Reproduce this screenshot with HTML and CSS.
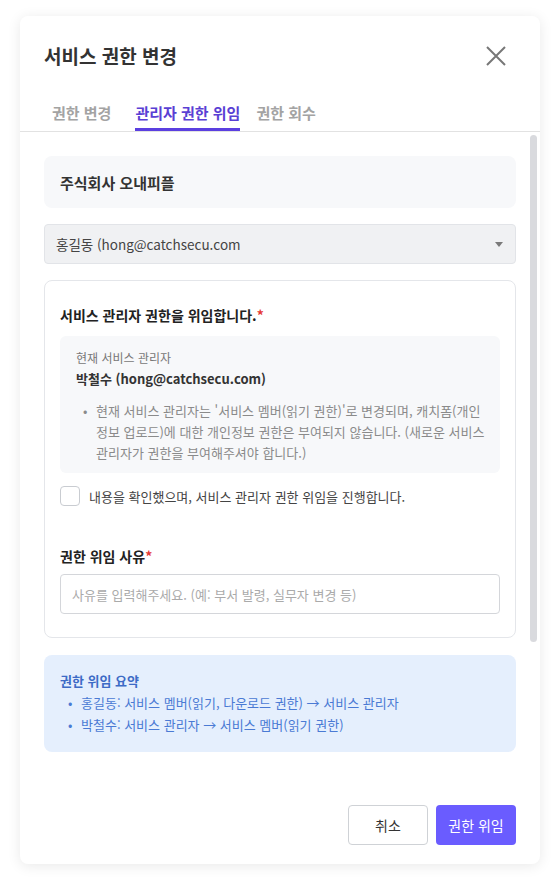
FILE: index.html
```html
<!DOCTYPE html>
<html lang="ko">

<head>
    <meta charset="UTF-8">
    <meta name="viewport" content="width=device-width, initial-scale=1.0">
    <title>서비스 권한 변경</title>
    <link rel="stylesheet" href="styles.css">
</head>

<body>
    <div class="modal">
        <div class="modal-header">
            <h1 class="modal-title">서비스 권한 변경</h1>
            <button class="close-button" aria-label="닫기">
                <svg width="20" height="20" viewBox="0 0 20 20">
                    <path d="M1 1 L19 19 M19 1 L1 19" stroke="#777" stroke-width="2" fill="none" />
                </svg>
            </button>
        </div>

        <div class="tabs">
            <span class="tab">권한 변경</span>
            <span class="tab active">관리자 권한 위임</span>
            <span class="tab">권한 회수</span>
        </div>

        <div class="modal-body">
            <div class="body-content">
                <div class="company-box">주식회사 오내피플</div>

                <div class="select">
                    <span>홍길동 (hong@catchsecu.com</span>
                    <span class="caret"></span>
                </div>

                <div class="card">
                    <h2 class="field-title">서비스 관리자 권한을 위임합니다.<span class="required">*</span></h2>

                    <div class="info-box">
                        <p class="info-label">현재 서비스 관리자</p>
                        <p class="info-name">박철수 (hong@catchsecu.com)</p>
                        <ul class="info-list">
                            <li>현재 서비스 관리자는 '서비스 멤버(읽기 권한)'로 변경되며, 캐치폼(개인<br>정보 업로드)에 대한 개인정보 권한은 부여되지 않습니다. (새로운 서비스<br>관리자가 권한을 부여해주셔야 합니다.)</li>
                        </ul>
                    </div>

                    <label class="check-row">
                        <span class="checkbox"></span>
                        <span>내용을 확인했으며, 서비스 관리자 권한 위임을 진행합니다.</span>
                    </label>

                    <h2 class="field-title reason-title">권한 위임 사유<span class="required">*</span></h2>
                    <input class="text-input" type="text" placeholder="사유를 입력해주세요. (예: 부서 발령, 실무자 변경 등)">
                </div>

                <div class="summary">
                    <h3 class="summary-title">권한 위임 요약</h3>
                    <ul class="summary-list">
                        <li>홍길동: 서비스 멤버(읽기, 다운로드 권한) → 서비스 관리자</li>
                        <li>박철수: 서비스 관리자 → 서비스 멤버(읽기 권한)</li>
                    </ul>
                </div>
            </div>

            <!-- scrollbar drawn by hand, headless browser hides the real one -->
            <div class="scroll-track">
                <div class="scroll-thumb"></div>
            </div>
        </div>

        <div class="modal-footer">
            <button class="button secondary">취소</button>
            <button class="button primary">권한 위임</button>
        </div>
    </div>
</body>

</html>
```

FILE: styles.css
```css
/* Reset styles */
* {
    margin: 0;
    padding: 0;
    box-sizing: border-box;
}

body {
    font-family: "Noto Sans CJK KR", "Noto Sans", sans-serif;
    color: #333;
    background: #ffffff;
    padding: 16px 20px 25px;
}

.modal {
    width: 520px;
    height: 848px;
    background: #fff;
    border-radius: 8px;
    box-shadow: 0 2px 14px rgba(0, 0, 0, 0.09);
    display: flex;
    flex-direction: column;
    overflow: hidden;
}

/* Header */
.modal-header {
    display: flex;
    justify-content: space-between;
    align-items: center;
    padding: 26px 34px 0 24px;
}

.modal-title {
    font-size: 19px;
    font-weight: 700;
    line-height: 28px;
    color: #333;
}

.close-button {
    background: none;
    border: none;
    width: 20px;
    height: 20px;
    cursor: pointer;
    display: flex;
}

/* Tabs */
.tabs {
    display: flex;
    margin-top: 32px;
    padding-left: 32px;
    border-bottom: 1px solid #e2e2e2;
}

.tab {
    font-size: 15px;
    font-weight: 700;
    line-height: 22px;
    color: #a3a3a3;
    padding-bottom: 4px;
    border-bottom: 3px solid transparent;
    margin-right: 16px;
}

.tab:first-child {
    margin-right: 24px;
}

.tab.active {
    color: #5a3fd4;
    border-bottom-color: #5b3fe0;
}

/* Body with its scrollbar */
.modal-body {
    flex: 1;
    display: flex;
    overflow: hidden;
}

.body-content {
    flex: 1;
    padding: 24px 14px 0 24px;
}

.scroll-track {
    width: 10px;
    padding-top: 3px;
}

.scroll-thumb {
    width: 7px;
    height: 507px;
    background: #d9dade;
    border-radius: 4px;
}

.company-box {
    height: 52px;
    background: #f7f8fa;
    border-radius: 8px;
    padding: 0 16px;
    display: flex;
    align-items: center;
    font-size: 15px;
    font-weight: 700;
    color: #333;
}

.select {
    margin-top: 16px;
    height: 40px;
    background: #f0f1f3;
    border: 1px solid #e2e4e8;
    border-radius: 4px;
    padding: 0 12px 0 11px;
    display: flex;
    justify-content: space-between;
    align-items: center;
    font-size: 13.5px;
    color: #444;
}

.caret {
    width: 0;
    height: 0;
    border-left: 4px solid transparent;
    border-right: 4px solid transparent;
    border-top: 5px solid #7a7a7a;
}

.card {
    margin-top: 16px;
    border: 1px solid #e4e6ea;
    border-radius: 8px;
    padding: 23px 15px 23px;
}

.field-title {
    font-size: 14px;
    font-weight: 700;
    line-height: 22px;
    color: #222;
}

.required {
    color: #e53935;
}

.info-box {
    margin-top: 10px;
    background: #f7f8fa;
    border-radius: 6px;
    padding: 12px 10px 10px 16px;
}

.info-label {
    font-size: 12px;
    line-height: 20px;
    color: #777;
}

.info-name {
    font-size: 13px;
    font-weight: 700;
    line-height: 22px;
    color: #333;
}

.info-list {
    list-style: none;
    margin-top: 10px;
}

.info-list li {
    position: relative;
    padding-left: 20px;
    font-size: 13px;
    line-height: 21px;
    color: #8a8a8a;
    white-space: nowrap;
}

.info-list li::before {
    content: "•";
    position: absolute;
    left: 7px;
}

.check-row {
    margin-top: 13px;
    display: flex;
    align-items: center;
    gap: 9px;
    font-size: 13px;
    color: #444;
}

.checkbox {
    width: 20px;
    height: 20px;
    border: 1px solid #c9ccd1;
    border-radius: 4px;
    background: #fff;
}

.reason-title {
    margin-top: 39px;
}

.text-input {
    display: block;
    width: 100%;
    height: 40px;
    margin-top: 7px;
    border: 1px solid #d4d6da;
    border-radius: 4px;
    padding: 0 11px;
    font-family: inherit;
    font-size: 13px;
    color: #333;
}

.text-input::placeholder {
    color: #aaaaaa;
}

/* Summary */
.summary {
    margin-top: 17px;
    background: #e5effd;
    border-radius: 8px;
    padding: 16px 16px 16px;
}

.summary-title {
    font-size: 13px;
    font-weight: 700;
    line-height: 20px;
    color: #3d6bc6;
}

.summary-list {
    list-style: none;
    margin-top: 1px;
}

.summary-list li {
    position: relative;
    padding-left: 21px;
    font-size: 13px;
    line-height: 22px;
    color: #4a7ad4;
}

.summary-list li::before {
    content: "•";
    position: absolute;
    left: 8px;
}

/* Footer */
.modal-footer {
    display: flex;
    justify-content: flex-end;
    gap: 8px;
    padding: 24px 24px 19px;
}

.button {
    width: 80px;
    height: 40px;
    border-radius: 4px;
    font-family: inherit;
    font-size: 14px;
    cursor: pointer;
}

.button.secondary {
    background: #fff;
    border: 1px solid #cfd2d6;
    color: #333;
}

.button.primary {
    background: #6a5cff;
    border: none;
    color: #fff;
}
```
